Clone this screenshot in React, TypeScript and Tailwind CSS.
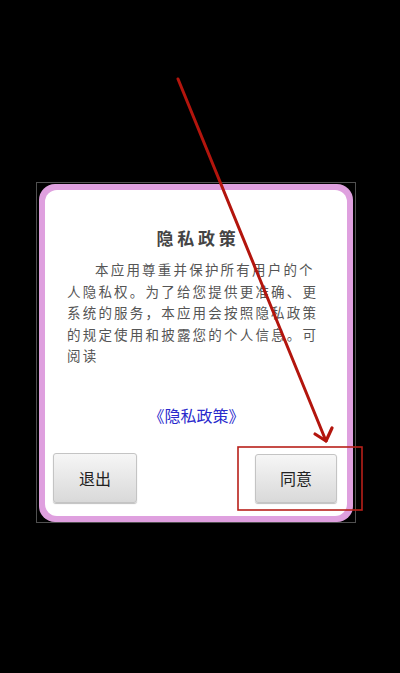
import React from "react";

const cjk = { fontFamily: '"Noto Sans CJK SC", "Noto Sans", sans-serif' };

export default function App() {
  return (
    <div className="relative w-[400px] h-[673px] bg-black overflow-hidden" style={cjk}>
      <div className="pt-[182px] pl-[36px]">
        <div className="w-[320px] h-[341px] border border-[#505050] pt-[1px] pl-[2px] pr-[2px]">
          <div className="w-[314px] h-[338px] rounded-[16px] bg-[#dfa0df] p-[6px]">
            <div className="w-full h-full rounded-[12px] bg-white flex flex-col pt-[36px]">
              <div className="h-[24px] leading-[24px] text-center text-[17px] font-bold text-[#444] tracking-[3.7px] pl-[4px]">
                隐私政策
              </div>
              <div className="mt-[9px] pl-[22px] text-[13.5px] leading-[21.5px] text-[#555] tracking-[2.2px] whitespace-nowrap">
                <div className="pl-[28px]">本应用尊重并保护所有用户的个</div>
                <div>人隐私权。为了给您提供更准确、更</div>
                <div>系统的服务，本应用会按照隐私政策</div>
                <div>的规定使用和披露您的个人信息。可</div>
                <div>阅读</div>
              </div>
              <div className="mt-[38px] h-[20px] leading-[20px] text-center text-[16px] text-[#2a2acc] pl-[1px]">
                《隐私政策》
              </div>
              <div className="mt-[28px] flex justify-between pl-[8px] pr-[10px]">
                <button className="w-[84px] h-[50px] rounded-[3px] border border-[#c4c4c4] bg-gradient-to-b from-[#f6f6f6] to-[#d9d9d9] shadow-[0_1px_1px_rgba(0,0,0,0.25)] text-[16px] text-[#222]">
                  退出
                </button>
                <button className="w-[82px] h-[49px] mt-[1px] rounded-[3px] border border-[#c4c4c4] bg-gradient-to-b from-[#f6f6f6] to-[#d9d9d9] shadow-[0_1px_1px_rgba(0,0,0,0.25)] text-[16px] text-[#222]">
                  同意
                </button>
              </div>
            </div>
          </div>
        </div>
      </div>
      <svg className="absolute inset-0 pointer-events-none" width="400" height="673" viewBox="0 0 400 673">
        <line x1="178" y1="79" x2="326" y2="441" stroke="#b3150d" strokeWidth="3" strokeLinecap="round" />
        <polyline points="315,434 326,441 332,428" fill="none" stroke="#b3150d" strokeWidth="3.2" strokeLinecap="round" strokeLinejoin="round" />
        <rect x="238" y="447" width="124" height="63" fill="none" stroke="#b8201a" strokeWidth="1.6" />
      </svg>
    </div>
  );
}
